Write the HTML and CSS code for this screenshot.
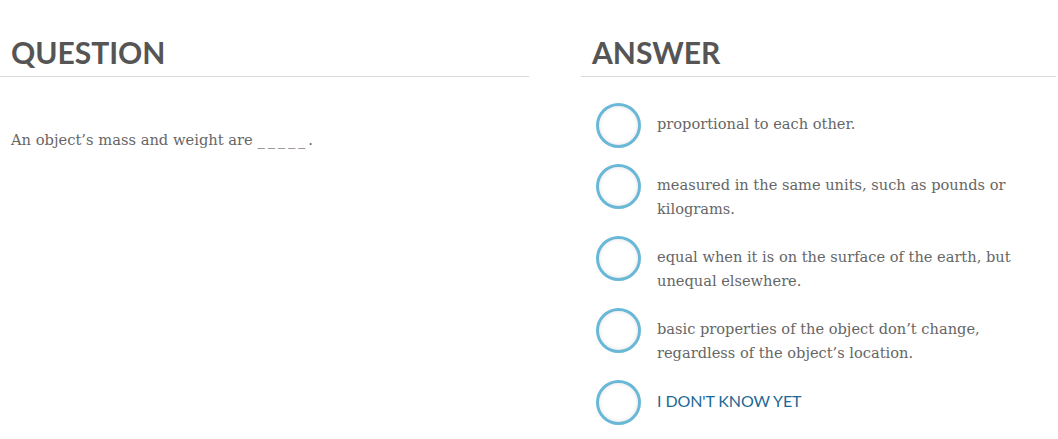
FILE: index.html
```html
<!DOCTYPE html>
<html>
<head>
<meta charset="utf-8">
<link rel="stylesheet" href="styles.css">
</head>
<body>
<div class="page">
  <section class="col col-q">
    <h2 class="heading">QUESTION</h2>
    <p class="question">An object’s mass and weight are <span class="blank">_____</span>.</p>
  </section>
  <section class="col col-a">
    <h2 class="heading">ANSWER</h2>
    <ul class="answers">
      <li class="answer"><span class="radio"></span><span class="label">proportional to each other.</span></li>
      <li class="answer"><span class="radio"></span><span class="label">measured in the same units, such as pounds or kilograms.</span></li>
      <li class="answer"><span class="radio"></span><span class="label">equal when it is on the surface of the earth, but unequal elsewhere.</span></li>
      <li class="answer"><span class="radio"></span><span class="label">basic properties of the object don’t change, regardless of the object’s location.</span></li>
      <li class="answer"><span class="radio"></span><span class="label label-idk">I DON'T KNOW YET</span></li>
    </ul>
  </section>
</div>
</body>
</html>
```
FILE: styles.css
```css
html, body {
  margin: 0;
  padding: 0;
  background: #fff;
}
.page {
  display: flex;
  gap: 52px;
  padding-top: 34px;
  width: 1056px;
}
.col-q { width: 529px; }
.col-a { width: 475px; }
.heading {
  margin: 0;
  font-family: Lato, sans-serif;
  font-weight: 700;
  font-size: 30px;
  line-height: 36px;
  color: #555;
  padding: 0 0 6px 11px;
  border-bottom: 1px solid #d9d9d9;
}
.question {
  margin: 50px 0 0 11px;
  font-family: "DejaVu Serif", serif;
  font-size: 14.7px;
  line-height: 25px;
  color: #666;
}
.blank {
  letter-spacing: 2.8px;
}
.answers {
  list-style: none;
  margin: 26px 0 0 15px;
  padding: 0;
}
.answer {
  display: flex;
  gap: 16px;
  margin-bottom: 16px;
}
.radio {
  flex: none;
  width: 39px;
  height: 39px;
  border: 3px solid #6ab8d8;
  border-radius: 50%;
  box-shadow: inset 0 0 4px rgba(0,0,0,0.12);
}
.label {
  flex: 1;
  padding-top: 9px;
  margin-bottom: -1px;
  font-family: "DejaVu Serif", serif;
  font-size: 14.6px;
  line-height: 24px;
  color: #666;
}
.label-idk {
  font-family: Lato, sans-serif;
  font-size: 16px;
  color: #1b6996;
  letter-spacing: -0.1px;
}
```
